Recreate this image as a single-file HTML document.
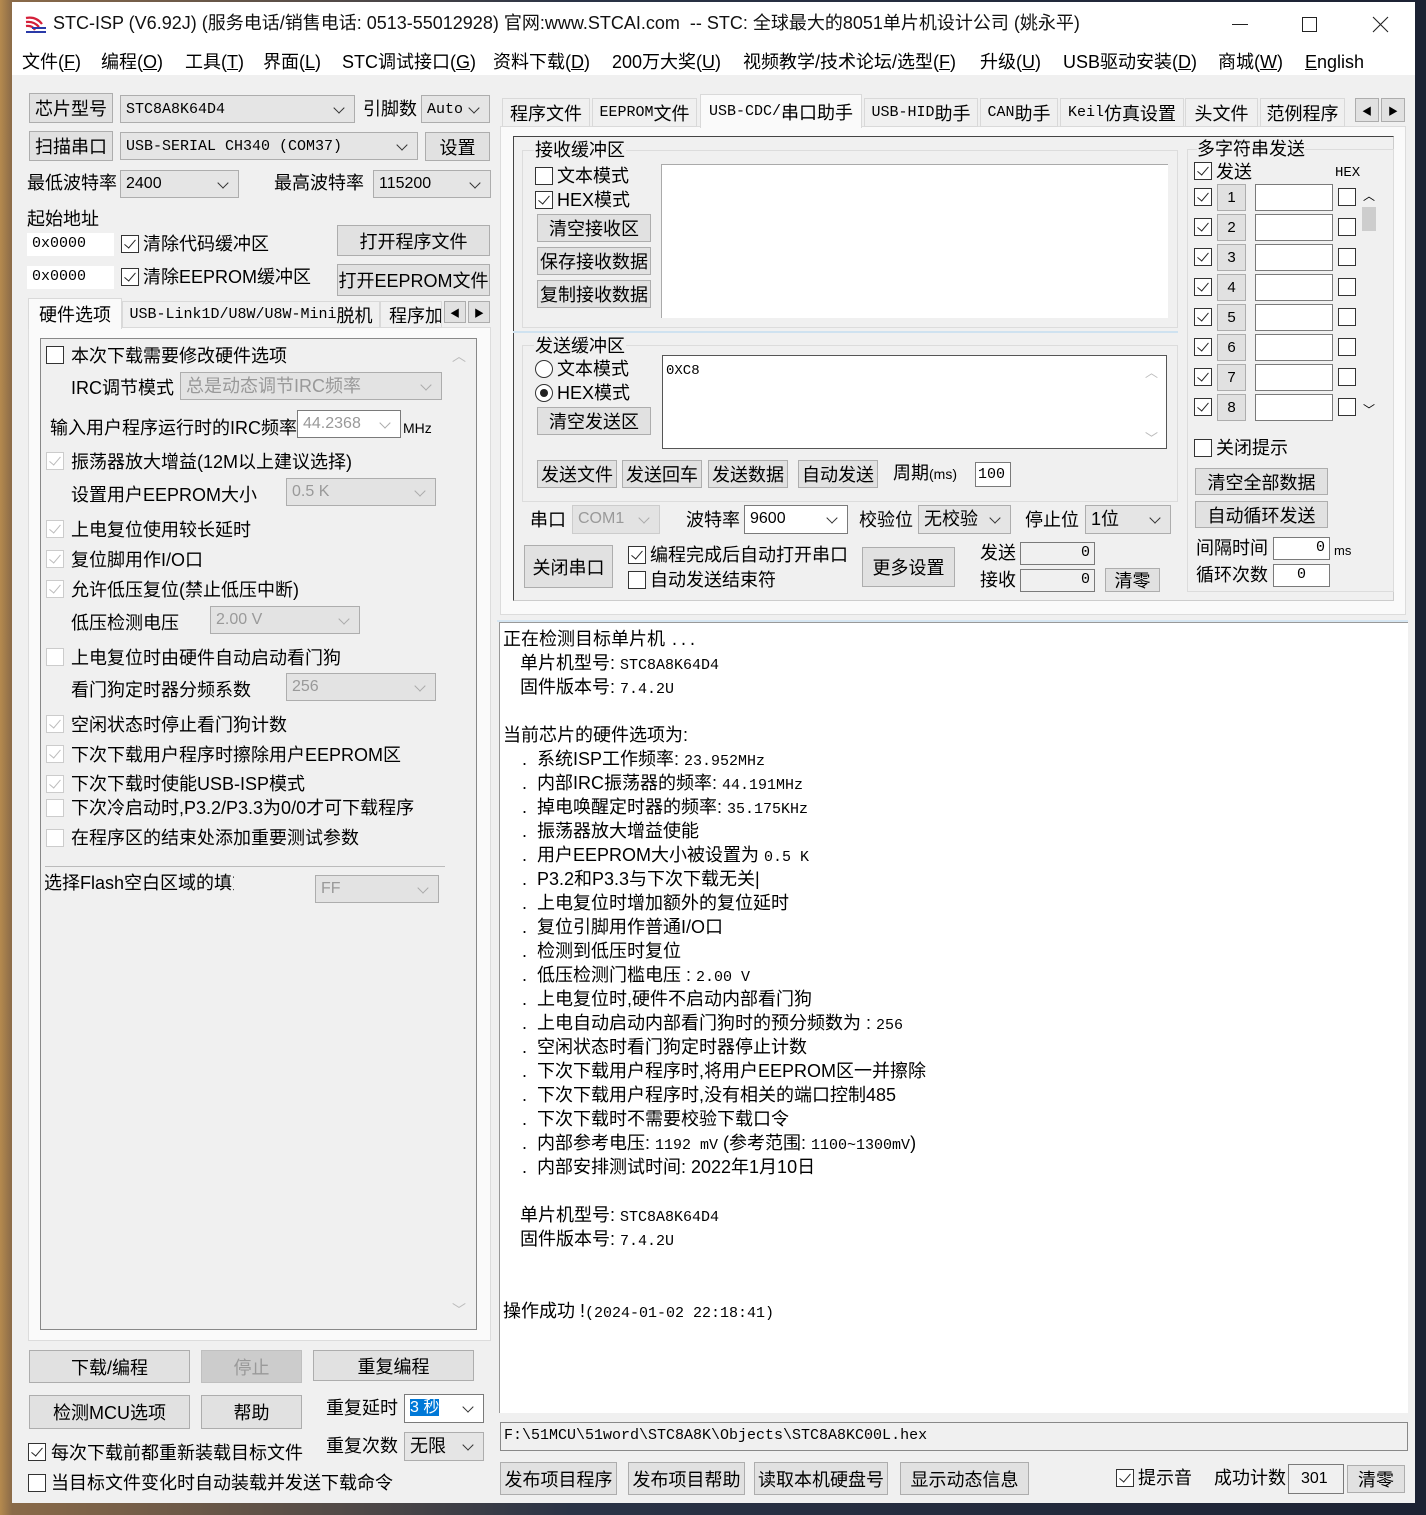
<!DOCTYPE html>
<html><head><meta charset="utf-8">
<style>
*{margin:0;padding:0;box-sizing:border-box}
body{width:1426px;height:1515px;overflow:hidden;position:relative;background:linear-gradient(90deg,#b58a4e 0,#8a6a48 12px,#2a3346 40%,#1c2233 100%);font-family:"Liberation Sans","Noto Sans CJK SC",sans-serif;color:#000}
.win{position:absolute;left:12px;top:2px;width:1403px;height:1501px;background:#f0f0f0}
.a{position:absolute}
.t{position:absolute;white-space:nowrap;font-size:18px;line-height:22px;font-family:"Liberation Sans","Noto Sans CJK SC",sans-serif}
.m{font-family:"Liberation Mono","Noto Sans CJK SC",monospace;font-size:15px;font-style:normal}
.b{position:absolute;background:#e1e1e1;border:1px solid #adadad;display:flex;align-items:center;justify-content:center;font-size:18px;white-space:nowrap;font-family:"Liberation Sans","Noto Sans CJK SC",sans-serif}
.cb{position:absolute;width:18px;height:18px;border:1px solid #333;background:#fff}
.ck::after{content:"";position:absolute;left:5px;top:1px;width:5px;height:10px;border-right:1.5px solid #222;border-bottom:1.5px solid #222;transform:rotate(40deg)}
.dis{border-color:#ccc}.dis.ck::after{border-color:#bbb}
.cm{position:absolute;background:#e5e5e5;border:1px solid #adadad;font-size:16px;line-height:26px;padding-left:5px;white-space:nowrap;overflow:hidden}
.cm::after{content:"";position:absolute;right:11px;top:8px;width:7px;height:7px;border-right:1.3px solid #333;border-bottom:1.3px solid #333;transform:rotate(45deg)}
.cm.w{background:#fff;border-color:#7a7a7a}
.cm.g{color:#999;background:#e3e3e3}.cm.g::after{border-color:#aaa}
.in{position:absolute;background:#fff;border:1px solid #7a7a7a;font-size:15px;line-height:20px;padding:0 4px;font-family:"Liberation Mono",monospace}
.tab{position:absolute;background:#f0f0f0;border:1px solid #d9d9d9;font-size:18px;display:flex;align-items:center;justify-content:center;white-space:nowrap}
.gb{position:absolute;border:1px solid #dcdcdc}
.log .t{font-size:18px}
</style></head><body>
<div class="win">
<div class="a" style="left:0;top:0;width:1403px;height:73px;background:#fff"></div>
<svg class="a" style="left:12px;top:10px" width="24" height="24" viewBox="0 0 24 24"><path d="M2 6 Q12 4 18 12 M2 10 Q10 9 15 15 M2 14 Q8 13 11 18" stroke="#d4203a" stroke-width="2.2" fill="none"/><path d="M2 20 L22 20 M8 16 L22 16" stroke="#2a3aa8" stroke-width="2" fill="none"/></svg>
<div class="t" style="left:41px;top:10px;font-size:18px;color:#111">STC-ISP (V6.92J) (服务电话/销售电话: 0513-55012928) 官网:www.STCAI.com &nbsp;-- STC: 全球最大的8051单片机设计公司 (姚永平)</div>
<div class="a" style="left:1220px;top:22px;width:16px;height:1px;background:#222"></div>
<div class="a" style="left:1290px;top:15px;width:15px;height:15px;border:1px solid #222"></div>
<svg class="a" style="left:1360px;top:14px" width="17" height="17" viewBox="0 0 17 17"><path d="M1 1L16 16M16 1L1 16" stroke="#222" stroke-width="1.1"/></svg>
<div class="t" style="left:10px;top:49px">文件(<u>F</u>)</div>
<div class="t" style="left:89px;top:49px">编程(<u>O</u>)</div>
<div class="t" style="left:173px;top:49px">工具(<u>T</u>)</div>
<div class="t" style="left:251px;top:49px">界面(<u>L</u>)</div>
<div class="t" style="left:330px;top:49px">STC调试接口(<u>G</u>)</div>
<div class="t" style="left:481px;top:49px">资料下载(<u>D</u>)</div>
<div class="t" style="left:600px;top:49px">200万大奖(<u>U</u>)</div>
<div class="t" style="left:731px;top:49px">视频教学/技术论坛/选型(<u>F</u>)</div>
<div class="t" style="left:968px;top:49px">升级(<u>U</u>)</div>
<div class="t" style="left:1051px;top:49px">USB驱动安装(<u>D</u>)</div>
<div class="t" style="left:1206px;top:49px">商城(<u>W</u>)</div>
<div class="t" style="left:1293px;top:49px"><u>E</u>nglish</div>

<div class="b" style="left:17px;top:91px;width:84px;height:30px">芯片型号</div>
<div class="cm" style="left:108px;top:93px;width:235px;height:28px"><i class="m">STC8A8K64D4</i></div>
<div class="t" style="left:351px;top:96px">引脚数</div>
<div class="cm" style="left:409px;top:93px;width:69px;height:28px"><i class="m">Auto</i></div>
<div class="b" style="left:17px;top:129px;width:84px;height:30px">扫描串口</div>
<div class="cm" style="left:108px;top:130px;width:298px;height:28px"><i class="m">USB-SERIAL CH340 (COM37)</i></div>
<div class="b" style="left:413px;top:130px;width:65px;height:29px">设置</div>
<div class="t" style="left:15px;top:170px">最低波特率</div>
<div class="cm" style="left:108px;top:168px;width:119px;height:28px">2400</div>
<div class="t" style="left:262px;top:170px">最高波特率</div>
<div class="cm" style="left:361px;top:168px;width:118px;height:28px">115200</div>
<div class="t" style="left:15px;top:206px">起始地址</div>
<div class="in" style="left:15px;top:231px;width:87px;height:23px;border-color:#fff">0x0000</div>
<div class="cb ck" style="left:109px;top:233px"></div>
<div class="t" style="left:131px;top:231px">清除代码缓冲区</div>
<div class="b" style="left:325px;top:223px;width:153px;height:31px">打开程序文件</div>
<div class="in" style="left:15px;top:264px;width:87px;height:23px;border-color:#fff">0x0000</div>
<div class="cb ck" style="left:109px;top:266px"></div>
<div class="t" style="left:131px;top:264px">清除EEPROM缓冲区</div>
<div class="b" style="left:325px;top:262px;width:153px;height:32px">打开EEPROM文件</div>
<div class="a" style="left:16px;top:325px;width:463px;height:1014px;background:#fafafa;border:1px solid #dcdcdc"></div>
<div class="tab" style="left:16px;top:296px;width:94px;height:31px;background:#fafafa;border-bottom:none">硬件选项</div>
<div class="tab" style="left:110px;top:299px;width:258px;height:27px"><i class="m">USB-Link1D/U8W/U8W-Mini</i>脱机</div>
<div class="tab" style="left:368px;top:299px;width:62px;height:27px;justify-content:flex-start;padding-left:8px;overflow:hidden">程序加</div>
<div class="b" style="left:432px;top:299px;width:22px;height:22px;font-size:10px">◀</div>
<div class="b" style="left:456px;top:299px;width:22px;height:22px;font-size:10px">▶</div>
<div class="a" style="left:28px;top:336px;width:437px;height:992px;background:#f0f0f0;border:1px solid #888"></div>
<div class="t" style="left:440px;top:343px;color:#bbb;font-size:14px">︿</div>
<div class="t" style="left:440px;top:1297px;color:#bbb;font-size:14px">﹀</div>
<div class="cb" style="left:34px;top:344px"></div><div class="t" style="left:59px;top:343px">本次下载需要修改硬件选项</div>
<div class="t" style="left:59px;top:375px">IRC调节模式</div>
<div class="cm g" style="left:168px;top:370px;width:262px;height:28px;font-size:18px">总是动态调节IRC频率</div>
<div class="t" style="left:38px;top:415px">输入用户程序运行时的IRC频率</div>
<div class="cm w g" style="left:285px;top:408px;width:104px;height:28px;background:#fff">44.2368</div>
<div class="t" style="left:391px;top:415px;font-size:14px">MHz</div>
<div class="cb dis ck" style="left:34px;top:450px"></div><div class="t" style="left:59px;top:449px">振荡器放大增益(12M以上建议选择)</div>
<div class="t" style="left:59px;top:482px">设置用户EEPROM大小</div>
<div class="cm g" style="left:274px;top:476px;width:150px;height:28px">0.5 K</div>
<div class="cb dis ck" style="left:34px;top:518px"></div><div class="t" style="left:59px;top:517px">上电复位使用较长延时</div>
<div class="cb dis ck" style="left:34px;top:548px"></div><div class="t" style="left:59px;top:547px">复位脚用作I/O口</div>
<div class="cb dis ck" style="left:34px;top:578px"></div><div class="t" style="left:59px;top:577px">允许低压复位(禁止低压中断)</div>
<div class="t" style="left:59px;top:610px">低压检测电压</div>
<div class="cm g" style="left:198px;top:604px;width:150px;height:28px">2.00 V</div>
<div class="cb dis" style="left:34px;top:646px"></div><div class="t" style="left:59px;top:645px">上电复位时由硬件自动启动看门狗</div>
<div class="t" style="left:59px;top:677px">看门狗定时器分频系数</div>
<div class="cm g" style="left:274px;top:671px;width:150px;height:28px">256</div>
<div class="cb dis ck" style="left:34px;top:713px"></div><div class="t" style="left:59px;top:712px">空闲状态时停止看门狗计数</div>
<div class="cb dis ck" style="left:34px;top:743px"></div><div class="t" style="left:59px;top:742px">下次下载用户程序时擦除用户EEPROM区</div>
<div class="cb dis ck" style="left:34px;top:773px"></div><div class="t" style="left:59px;top:771px">下次下载时使能USB-ISP模式</div>
<div class="cb dis" style="left:34px;top:797px"></div><div class="t" style="left:59px;top:795px">下次冷启动时,P3.2/P3.3为0/0才可下载程序</div>
<div class="cb dis" style="left:34px;top:827px"></div><div class="t" style="left:59px;top:825px">在程序区的结束处添加重要测试参数</div>
<div class="a" style="left:33px;top:864px;width:400px;height:1px;background:#bbb"></div>
<div class="t" style="left:32px;top:870px">选择Flash空白区域的填充</div>
<div class="a" style="left:222px;top:868px;width:30px;height:24px;background:#f0f0f0"></div>
<div class="cm g" style="left:303px;top:873px;width:124px;height:28px">FF</div>
<div class="b" style="left:17px;top:1348px;width:161px;height:33px">下载/编程</div>
<div class="b" style="left:189px;top:1348px;width:101px;height:33px;background:#ccc;border-color:#bfbfbf;color:#999">停止</div>
<div class="b" style="left:301px;top:1348px;width:161px;height:31px">重复编程</div>
<div class="b" style="left:17px;top:1393px;width:161px;height:34px">检测MCU选项</div>
<div class="b" style="left:189px;top:1393px;width:101px;height:34px">帮助</div>
<div class="t" style="left:314px;top:1395px">重复延时</div>
<div class="cm w" style="left:392px;top:1392px;width:80px;height:29px"><span style="background:#0078d7;color:#fff;font-size:16px">3 秒</span></div>
<div class="t" style="left:314px;top:1433px">重复次数</div>
<div class="cm" style="left:392px;top:1430px;width:80px;height:29px;font-size:18px">无限</div>
<div class="cb ck" style="left:16px;top:1441px"></div><div class="t" style="left:39px;top:1440px">每次下载前都重新装载目标文件</div>
<div class="cb" style="left:16px;top:1472px"></div><div class="t" style="left:39px;top:1470px">当目标文件变化时自动装载并发送下载命令</div>

<div class="a" style="left:488px;top:124px;width:906px;height:489px;background:#fafafa;border:1px solid #dcdcdc"></div>
<div class="tab" style="left:490px;top:96px;width:88px;height:29px">程序文件</div>
<div class="tab" style="left:580px;top:96px;width:105px;height:29px"><i class="m">EEPROM</i>文件</div>
<div class="tab" style="left:688px;top:92px;width:162px;height:34px;background:#fafafa;border-bottom:none"><i class="m">USB-CDC/</i>串口助手</div>
<div class="tab" style="left:852px;top:96px;width:114px;height:29px"><i class="m">USB-HID</i>助手</div>
<div class="tab" style="left:968px;top:96px;width:78px;height:29px"><i class="m">CAN</i>助手</div>
<div class="tab" style="left:1048px;top:96px;width:124px;height:29px"><i class="m">Keil</i>仿真设置</div>
<div class="tab" style="left:1173px;top:96px;width:73px;height:29px">头文件</div>
<div class="tab" style="left:1248px;top:96px;width:85px;height:29px">范例程序</div>
<div class="b" style="left:1343px;top:96px;width:24px;height:24px;font-size:10px">◀</div>
<div class="b" style="left:1369px;top:96px;width:24px;height:24px;font-size:10px">▶</div>
<div class="a" style="left:501px;top:134px;width:881px;height:465px;background:#f0f0f0;border:1px solid #444;border-right-color:#ccc;border-bottom-color:#ccc"></div>
<div class="gb" style="left:510px;top:148px;width:656px;height:178px"></div>
<div class="t" style="left:522px;top:137px;background:#f0f0f0;padding:0 1px">接收缓冲区</div>
<div class="cb" style="left:523px;top:165px"></div><div class="t" style="left:545px;top:163px">文本模式</div>
<div class="cb ck" style="left:523px;top:189px"></div><div class="t" style="left:545px;top:187px">HEX模式</div>
<div class="b" style="left:525px;top:212px;width:114px;height:28px">清空接收区</div>
<div class="b" style="left:525px;top:245px;width:114px;height:28px">保存接收数据</div>
<div class="b" style="left:525px;top:278px;width:114px;height:28px">复制接收数据</div>
<div class="a" style="left:649px;top:162px;width:507px;height:154px;background:#fff;border-top:1px solid #aaa;border-left:1px solid #aaa"></div>
<div class="a" style="left:501px;top:329px;width:665px;height:2px;background:#cfe2f0"></div>
<div class="gb" style="left:510px;top:343px;width:656px;height:157px"></div>
<div class="t" style="left:522px;top:333px;background:#f0f0f0;padding:0 1px">发送缓冲区</div>
<div class="cb" style="left:523px;top:358px;border-radius:50%"></div><div class="t" style="left:545px;top:356px">文本模式</div>
<div class="cb" style="left:523px;top:382px;border-radius:50%"><div class="a" style="left:4px;top:4px;width:8px;height:8px;border-radius:50%;background:#222"></div></div><div class="t" style="left:545px;top:380px">HEX模式</div>
<div class="b" style="left:525px;top:405px;width:114px;height:28px">清空发送区</div>
<div class="a" style="left:650px;top:353px;width:505px;height:94px;background:#fff;border:1px solid #555"></div>
<div class="t" style="left:654px;top:358px;font-size:14px;font-family:'Liberation Mono',monospace">0XC8</div>
<div class="t" style="left:1133px;top:360px;color:#bbb;font-size:13px">︿</div>
<div class="t" style="left:1133px;top:426px;color:#bbb;font-size:13px">﹀</div>
<div class="b" style="left:525px;top:458px;width:80px;height:28px">发送文件</div>
<div class="b" style="left:610px;top:458px;width:80px;height:28px">发送回车</div>
<div class="b" style="left:696px;top:458px;width:80px;height:28px">发送数据</div>
<div class="b" style="left:786px;top:458px;width:80px;height:28px">自动发送</div>
<div class="t" style="left:881px;top:460px">周期<span style="font-size:14px">(ms)</span></div>
<div class="in" style="left:963px;top:460px;width:36px;height:25px;padding:2px 2px">100</div>
<div class="t" style="left:518px;top:507px">串口</div>
<div class="cm g" style="left:560px;top:503px;width:88px;height:29px;border-color:#ccc">COM1</div>
<div class="t" style="left:674px;top:507px">波特率</div>
<div class="cm w" style="left:732px;top:503px;width:104px;height:29px">9600</div>
<div class="t" style="left:847px;top:507px">校验位</div>
<div class="cm" style="left:906px;top:503px;width:93px;height:29px;font-size:18px">无校验</div>
<div class="t" style="left:1013px;top:507px">停止位</div>
<div class="cm" style="left:1073px;top:503px;width:86px;height:29px;font-size:18px">1位</div>
<div class="b" style="left:512px;top:543px;width:89px;height:43px">关闭串口</div>
<div class="cb ck" style="left:616px;top:544px"></div><div class="t" style="left:638px;top:542px">编程完成后自动打开串口</div>
<div class="cb" style="left:616px;top:569px"></div><div class="t" style="left:638px;top:567px">自动发送结束符</div>
<div class="b" style="left:850px;top:545px;width:93px;height:40px">更多设置</div>
<div class="t" style="left:968px;top:540px">发送</div>
<div class="in" style="left:1008px;top:540px;width:75px;height:23px;text-align:right;background:#f0f0f0">0</div>
<div class="t" style="left:968px;top:567px">接收</div>
<div class="in" style="left:1008px;top:567px;width:75px;height:23px;text-align:right;background:#f0f0f0">0</div>
<div class="b" style="left:1093px;top:566px;width:55px;height:24px">清零</div>
<div class="gb" style="left:1175px;top:147px;width:207px;height:443px"></div>
<div class="t" style="left:1185px;top:136px;background:#f0f0f0">多字符串发送</div>
<div class="cb ck" style="left:1182px;top:160px"></div><div class="t" style="left:1204px;top:159px">发送</div>
<div class="t" style="left:1323px;top:160px;font-size:14px;font-family:'Liberation Mono',monospace">HEX</div>
<div class="cb ck" style="left:1182px;top:186px"></div><div class="b" style="left:1205px;top:182px;width:29px;height:27px;font-size:15px">1</div><div class="in" style="left:1243px;top:182px;width:78px;height:27px"></div><div class="cb" style="left:1326px;top:186px"></div>
<div class="cb ck" style="left:1182px;top:216px"></div><div class="b" style="left:1205px;top:212px;width:29px;height:27px;font-size:15px">2</div><div class="in" style="left:1243px;top:212px;width:78px;height:27px"></div><div class="cb" style="left:1326px;top:216px"></div>
<div class="cb ck" style="left:1182px;top:246px"></div><div class="b" style="left:1205px;top:242px;width:29px;height:27px;font-size:15px">3</div><div class="in" style="left:1243px;top:242px;width:78px;height:27px"></div><div class="cb" style="left:1326px;top:246px"></div>
<div class="cb ck" style="left:1182px;top:276px"></div><div class="b" style="left:1205px;top:272px;width:29px;height:27px;font-size:15px">4</div><div class="in" style="left:1243px;top:272px;width:78px;height:27px"></div><div class="cb" style="left:1326px;top:276px"></div>
<div class="cb ck" style="left:1182px;top:306px"></div><div class="b" style="left:1205px;top:302px;width:29px;height:27px;font-size:15px">5</div><div class="in" style="left:1243px;top:302px;width:78px;height:27px"></div><div class="cb" style="left:1326px;top:306px"></div>
<div class="cb ck" style="left:1182px;top:336px"></div><div class="b" style="left:1205px;top:332px;width:29px;height:27px;font-size:15px">6</div><div class="in" style="left:1243px;top:332px;width:78px;height:27px"></div><div class="cb" style="left:1326px;top:336px"></div>
<div class="cb ck" style="left:1182px;top:366px"></div><div class="b" style="left:1205px;top:362px;width:29px;height:27px;font-size:15px">7</div><div class="in" style="left:1243px;top:362px;width:78px;height:27px"></div><div class="cb" style="left:1326px;top:366px"></div>
<div class="cb ck" style="left:1182px;top:396px"></div><div class="b" style="left:1205px;top:392px;width:29px;height:27px;font-size:15px">8</div><div class="in" style="left:1243px;top:392px;width:78px;height:27px"></div><div class="cb" style="left:1326px;top:396px"></div>
<div class="a" style="left:1349px;top:183px;width:16px;height:235px;background:#f0f0f0"></div>
<div class="a" style="left:1350px;top:205px;width:14px;height:24px;background:#cdcdcd"></div>
<div class="t" style="left:1351px;top:183px;font-size:12px">︿</div>
<div class="t" style="left:1351px;top:397px;font-size:12px">﹀</div>
<div class="cb" style="left:1182px;top:437px"></div><div class="t" style="left:1204px;top:435px">关闭提示</div>
<div class="b" style="left:1183px;top:466px;width:133px;height:27px">清空全部数据</div>
<div class="b" style="left:1183px;top:499px;width:133px;height:27px">自动循环发送</div>
<div class="t" style="left:1184px;top:535px">间隔时间</div>
<div class="in" style="left:1261px;top:535px;width:57px;height:23px;text-align:right">0</div>
<div class="t" style="left:1322px;top:538px;font-size:13px">ms</div>
<div class="t" style="left:1184px;top:562px">循环次数</div>
<div class="in" style="left:1261px;top:562px;width:57px;height:23px;text-align:center">0</div>

<div class="a" style="left:485px;top:618px;width:911px;height:2px;background:#d6e6f2"></div>
<div class="log a" style="left:487px;top:620px;width:909px;height:791px;background:#fff;border:1px solid #999;border-right:none;border-bottom:none">
<div class="t" style="left:3px;top:5px">正在检测目标单片机 <i class="m">...</i></div>
<div class="t" style="left:20px;top:29px">单片机型号: <i class="m">STC8A8K64D4</i></div>
<div class="t" style="left:20px;top:53px">固件版本号: <i class="m">7.4.2U</i></div>
<div class="t" style="left:3px;top:101px">当前芯片的硬件选项为:</div>
<div class="t" style="left:22px;top:125px">. &nbsp;系统ISP工作频率: <i class="m">23.952MHz</i></div>
<div class="t" style="left:22px;top:149px">. &nbsp;内部IRC振荡器的频率: <i class="m">44.191MHz</i></div>
<div class="t" style="left:22px;top:173px">. &nbsp;掉电唤醒定时器的频率: <i class="m">35.175KHz</i></div>
<div class="t" style="left:22px;top:197px">. &nbsp;振荡器放大增益使能</div>
<div class="t" style="left:22px;top:221px">. &nbsp;用户EEPROM大小被设置为 <i class="m">0.5 K</i></div>
<div class="t" style="left:22px;top:245px">. &nbsp;P3.2和P3.3与下次下载无关|</div>
<div class="t" style="left:22px;top:269px">. &nbsp;上电复位时增加额外的复位延时</div>
<div class="t" style="left:22px;top:293px">. &nbsp;复位引脚用作普通I/O口</div>
<div class="t" style="left:22px;top:317px">. &nbsp;检测到低压时复位</div>
<div class="t" style="left:22px;top:341px">. &nbsp;低压检测门槛电压 : <i class="m">2.00 V</i></div>
<div class="t" style="left:22px;top:365px">. &nbsp;上电复位时,硬件不启动内部看门狗</div>
<div class="t" style="left:22px;top:389px">. &nbsp;上电自动启动内部看门狗时的预分频数为 : <i class="m">256</i></div>
<div class="t" style="left:22px;top:413px">. &nbsp;空闲状态时看门狗定时器停止计数</div>
<div class="t" style="left:22px;top:437px">. &nbsp;下次下载用户程序时,将用户EEPROM区一并擦除</div>
<div class="t" style="left:22px;top:461px">. &nbsp;下次下载用户程序时,没有相关的端口控制485</div>
<div class="t" style="left:22px;top:485px">. &nbsp;下次下载时不需要校验下载口令</div>
<div class="t" style="left:22px;top:509px">. &nbsp;内部参考电压: <i class="m">1192 mV</i> (参考范围: <i class="m">1100~1300mV</i>)</div>
<div class="t" style="left:22px;top:533px">. &nbsp;内部安排测试时间: 2022年1月10日</div>
<div class="t" style="left:20px;top:581px">单片机型号: <i class="m">STC8A8K64D4</i></div>
<div class="t" style="left:20px;top:605px">固件版本号: <i class="m">7.4.2U</i></div>
<div class="t" style="left:3px;top:677px">操作成功 !<i class="m">(2024-01-02 22:18:41)</i></div>
</div>
<div class="a" style="left:488px;top:1420px;width:908px;height:29px;border:1px solid #888;background:#f0f0f0"></div>
<div class="t" style="left:492px;top:1423px;font-size:15px;font-family:'Liberation Mono',monospace">F:\51MCU\51word\STC8A8K\Objects\STC8A8KC00L.hex</div>
<div class="b" style="left:488px;top:1460px;width:117px;height:33px">发布项目程序</div>
<div class="b" style="left:616px;top:1460px;width:117px;height:33px">发布项目帮助</div>
<div class="b" style="left:742px;top:1460px;width:134px;height:33px">读取本机硬盘号</div>
<div class="b" style="left:888px;top:1460px;width:129px;height:33px">显示动态信息</div>
<div class="cb ck" style="left:1104px;top:1467px"></div><div class="t" style="left:1126px;top:1465px">提示音</div>
<div class="t" style="left:1202px;top:1465px">成功计数</div>
<div class="in" style="left:1276px;top:1462px;width:56px;height:30px;padding:4px 12px;background:#f0f0f0;font-family:'Liberation Sans',sans-serif;font-size:16px">301</div>
<div class="b" style="left:1335px;top:1463px;width:58px;height:28px">清零</div>
</div>
</body></html>
